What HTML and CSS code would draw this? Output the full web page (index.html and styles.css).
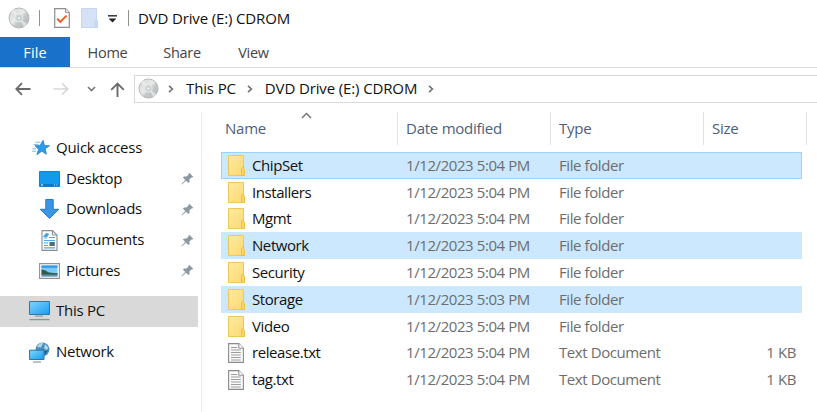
FILE: index.html
```html
<!DOCTYPE html>
<html lang="en">
<head>
    <meta charset="UTF-8">
    <meta name="viewport" content="width=device-width, initial-scale=1.0">
    <title>DVD Drive (E:) CDROM</title>
    <link rel="stylesheet" href="styles.css">
</head>
<body>

    <!-- shared icons -->
    <svg class="icon-defs" width="0" height="0">
        <defs>
            <linearGradient id="silver" x1="0" y1="0" x2="1" y2="1">
                <stop offset="0" stop-color="#d0d0d0"/>
                <stop offset="0.45" stop-color="#e9ebeb"/>
                <stop offset="0.6" stop-color="#c3c7c7"/>
                <stop offset="1" stop-color="#b5b8b8"/>
            </linearGradient>
            <linearGradient id="screen" x1="0" y1="0" x2="1" y2="1">
                <stop offset="0" stop-color="#7fd4fb"/>
                <stop offset="1" stop-color="#189df0"/>
            </linearGradient>
            <linearGradient id="yellow" x1="0" y1="0" x2="1" y2="1">
                <stop offset="0" stop-color="#ffeaa0"/>
                <stop offset="1" stop-color="#fbd970"/>
            </linearGradient>
        </defs>
        <symbol id="disc" viewBox="0 0 22 22">
            <circle cx="11" cy="11" r="10" fill="url(#silver)" stroke="#b4b7b7"/>
            <path d="M11 11 3 5l3-3zM11 11l8 6-3 3z" fill="#f4f6f6" opacity=".6"/>
            <circle cx="11" cy="11" r="4" fill="#cfd5d5" stroke="#e4e7e7"/>
            <circle cx="11" cy="11" r="1.5" fill="#fff" stroke="#b0b5b5" stroke-width=".6"/>
        </symbol>
        <symbol id="folder" viewBox="0 0 17 21">
            <path d="M.5.5h15v13l1 1v6H.5z" fill="url(#yellow)" stroke="#f0c757"/>
            <path d="M13.5 20.5v-7.2l2-1.8v2l1 1v6z" fill="#fbd566" stroke="#eabd46" stroke-width=".9"/>
        </symbol>
        <symbol id="text-file" viewBox="0 0 16 20">
            <path d="M.6.6h10.2l4.6 4.6v14.2H.6z" fill="#fafafa" stroke="#8b8b8b" stroke-width="1.1"/>
            <path d="M10.8.6v4.6h4.6" fill="#fff" stroke="#8b8b8b"/>
            <path d="M3 4.5h6M3 7h9.8M3 9.5h9.8M3 12h9.8M3 14.5h9.8M3 17h9.8" stroke="#9c9c9c"/>
        </symbol>
        <symbol id="pin" viewBox="0 0 13 13">
            <path d="M8.2.7l4.1 4.1-1.1.8-.7-.2-2.1 2.2.2 2.4-1.1 1.1L5 8.7.8 12.4l-.4-.3L4.2 8 1.9 5.5 3 4.4l2.4.2 2.2-2.1-.2-.7z" fill="#8c99a3"/>
        </symbol>
        <symbol id="chevron" viewBox="0 0 6 8">
            <path d="M1 .8 4.4 4 1 7.2" fill="none" stroke="#707070" stroke-width="1.6"/>
        </symbol>
    </svg>

    <div class="window">
        <header class="titlebar">
            <svg class="title-disc" width="22" height="22"><use href="#disc"/></svg>
            <span class="divider first"></span>
            <svg class="check" width="16" height="20" viewBox="0 0 16 20">
                <path d="M.7.7h10.8l3.8 3.8v14.8H.7z" fill="#fcfcfc" stroke="#8e8e8e" stroke-width="1.2"/>
                <path d="M11.5.7v3.8h3.8" fill="#eee" stroke="#999"/>
                <path d="M3.2 10.6l3 3.3 6.4-6.3" fill="none" stroke="#ee5a24" stroke-width="2"/>
            </svg>
            <svg class="new-folder" width="17" height="20" viewBox="0 0 17 20">
                <path d="M.5.5h15v11l1 1v7H.5z" fill="#d5e1f5" stroke="#c6d6ef"/>
                <path d="M13.5 19.5v-7l2-1 1 1v7z" fill="#c7d7f0"/>
            </svg>
            <svg class="customize" width="9" height="8" viewBox="0 0 9 8">
                <path d="M0 .8h9" stroke="#333" stroke-width="1.5"/>
                <path d="M.6 3.4h7.8L4.5 7.4z" fill="#222"/>
            </svg>
            <span class="divider second"></span>
            <span class="window-title">DVD Drive (E:) CDROM</span>
        </header>

        <nav class="ribbon">
            <span class="tab file">File</span>
            <span class="tab home">Home</span>
            <span class="tab share">Share</span>
            <span class="tab view">View</span>
        </nav>

        <div class="toolbar">
            <svg class="back" width="16" height="14" viewBox="0 0 16 14">
                <path d="M15.5 7H1.5M7 1.2 1.3 7 7 12.8" fill="none" stroke="#6a6a6a" stroke-width="1.8"/>
            </svg>
            <svg class="forward" width="16" height="14" viewBox="0 0 16 14">
                <path d="M.5 7h14M9 1.2 14.7 7 9 12.8" fill="none" stroke="#d6d6d6" stroke-width="1.6"/>
            </svg>
            <svg class="recent" width="9" height="6" viewBox="0 0 9 6">
                <path d="M1 1l3.5 3.5L8 1" fill="none" stroke="#777" stroke-width="1.6"/>
            </svg>
            <svg class="up" width="15" height="15" viewBox="0 0 15 15">
                <path d="M7.5 15V1.6M1.2 7.8l6.3-6.3 6.3 6.3" fill="none" stroke="#6a6a6a" stroke-width="1.9"/>
            </svg>
            <div class="address">
                <svg width="21" height="21"><use href="#disc"/></svg>
                <svg class="sep" width="6" height="8"><use href="#chevron"/></svg>
                <span class="crumb">This PC</span>
                <svg class="sep" width="6" height="8"><use href="#chevron"/></svg>
                <span class="crumb">DVD Drive (E:) CDROM</span>
                <svg class="sep" width="6" height="8"><use href="#chevron"/></svg>
            </div>
        </div>

        <div class="main">
            <aside class="sidebar">
                <div class="nav-item top">
                    <svg width="18" height="16" viewBox="0 0 18 16">
                        <path d="M11.2.3l1.2 5.1 5.2.3-4.3 3 1.1 5.6-4.6-3.1-4.9 3.5 1.7-5.5-3.7-3.5 5.1-.2z" fill="#2c9be8" stroke="#1979c4" stroke-width=".7"/>
                        <path d="M3.5 2.2h5M1.5 4.4h5M.5 8.8h3.5M0 11.2h4" stroke="#74bdee"/>
                    </svg>
                    <span>Quick access</span>
                </div>
                <div class="nav-item">
                    <svg width="21" height="16" viewBox="0 0 21 16">
                        <path d="M.5.5h20v15H.5z" fill="#129bed" stroke="#1b7fd0"/>
                        <path d="M1 14h19" stroke="#0b5fa8" stroke-width="1.2"/>
                        <path d="M2 14h2M15 14h1M17.5 14h1" stroke="#fff"/>
                    </svg>
                    <span>Desktop</span>
                    <svg class="pin" width="13" height="13"><use href="#pin"/></svg>
                </div>
                <div class="nav-item">
                    <svg width="21" height="20" viewBox="0 0 21 20">
                        <path d="M6.8.5h7.4v9.8h5.6L10.5 19.4 1.2 10.3h5.6z" fill="#3a96e5" stroke="#2279c8"/>
                    </svg>
                    <span>Downloads</span>
                    <svg class="pin" width="13" height="13"><use href="#pin"/></svg>
                </div>
                <div class="nav-item">
                    <svg width="21" height="21" viewBox="0 0 21 21">
                        <path d="M3 .6h10.5L18 5v15.4H3z" fill="#fcfcfc" stroke="#8d8d8d" stroke-width="1.1"/>
                        <path d="M13.5.6V5H18" fill="none" stroke="#8d8d8d"/>
                        <path d="M5 6.5l2.3-3 2 .7-1.4 2.3zM5 8h3M10 7.5h6M5 10.5h11M5 13h4M5 15.5h4M5 17.8h11" fill="#2c9be8" stroke="#50a7e5" stroke-width="1.2"/>
                        <path d="M10.5 12h5.3v4h-5.3z" fill="#4c6f80"/>
                    </svg>
                    <span>Documents</span>
                    <svg class="pin" width="13" height="13"><use href="#pin"/></svg>
                </div>
                <div class="nav-item">
                    <svg width="21" height="16" viewBox="0 0 21 16">
                        <path d="M.6.6h19.8v14.8H.6z" fill="#fff" stroke="#929292" stroke-width="1.1"/>
                        <path d="M2.5 2.5h16v11h-16z" fill="#7ec8f5"/>
                        <path d="M2.5 2.5h16v2.3h-16z" fill="#3297e5"/>
                        <path d="M2.5 6.5c4 .2 5 2.3 8 3 3 .4 5 .8 8 .6v2h-16z" fill="#315b4d"/>
                        <path d="M2.5 11.5h16v2h-16z" fill="#5c91ad"/>
                    </svg>
                    <span>Pictures</span>
                    <svg class="pin" width="13" height="13"><use href="#pin"/></svg>
                </div>
                <div class="nav-item top selected">
                    <svg width="21" height="20" viewBox="0 0 21 20">
                        <path d="M.5.5h20v13H.5z" fill="url(#screen)" stroke="#2a79ae"/>
                        <path d="M7 14.5h7v1.3H5.5z" fill="#909ca5"/>
                        <path d="M.5 18.6h20" stroke="#7c98aa" stroke-width="1.3"/>
                    </svg>
                    <span>This PC</span>
                </div>
                <div class="nav-item top network">
                    <svg width="21" height="21" viewBox="0 0 21 21">
                        <circle cx="13.5" cy="7.3" r="6.9" fill="#4c8eb8"/>
                        <path d="M8 5c1-3 4-4.3 6.4-4.2L12 5.5zM16 2l3.3 3.5L18 8l-3-1.5z" fill="#a9d8eb"/>
                        <path d="M15.5 9l3.5-.5-3 4.5z" fill="#245e87"/>
                        <path d="M.5 8.2h14.5v9.3H.5z" fill="url(#screen)" stroke="#2676ad"/>
                        <path d="M4 20h8" stroke="#8b9aa5" stroke-width="1.2"/>
                    </svg>
                    <span>Network</span>
                </div>
            </aside>

            <section class="files">
                <svg class="sort" width="11" height="7" viewBox="0 0 11 7">
                    <path d="M1 6l4.5-4.5L10 6" fill="none" stroke="#777" stroke-width="1.5"/>
                </svg>
                <div class="columns">
                    <span class="h-name">Name</span>
                    <span>Date modified</span>
                    <span>Type</span>
                    <span>Size</span>
                </div>
                <div class="rows">
                    <div class="row selected focused">
                        <svg width="17" height="21"><use href="#folder"/></svg>
                        <span class="name">ChipSet</span><span class="date">1/12/2023 5:04 PM</span><span class="type">File folder</span><span class="size"></span>
                    </div>
                    <div class="row">
                        <svg width="17" height="21"><use href="#folder"/></svg>
                        <span class="name">Installers</span><span class="date">1/12/2023 5:04 PM</span><span class="type">File folder</span><span class="size"></span>
                    </div>
                    <div class="row">
                        <svg width="17" height="21"><use href="#folder"/></svg>
                        <span class="name">Mgmt</span><span class="date">1/12/2023 5:04 PM</span><span class="type">File folder</span><span class="size"></span>
                    </div>
                    <div class="row selected">
                        <svg width="17" height="21"><use href="#folder"/></svg>
                        <span class="name">Network</span><span class="date">1/12/2023 5:04 PM</span><span class="type">File folder</span><span class="size"></span>
                    </div>
                    <div class="row">
                        <svg width="17" height="21"><use href="#folder"/></svg>
                        <span class="name">Security</span><span class="date">1/12/2023 5:04 PM</span><span class="type">File folder</span><span class="size"></span>
                    </div>
                    <div class="row selected">
                        <svg width="17" height="21"><use href="#folder"/></svg>
                        <span class="name">Storage</span><span class="date">1/12/2023 5:03 PM</span><span class="type">File folder</span><span class="size"></span>
                    </div>
                    <div class="row">
                        <svg width="17" height="21"><use href="#folder"/></svg>
                        <span class="name">Video</span><span class="date">1/12/2023 5:04 PM</span><span class="type">File folder</span><span class="size"></span>
                    </div>
                    <div class="row">
                        <svg width="16" height="20"><use href="#text-file"/></svg>
                        <span class="name">release.txt</span><span class="date">1/12/2023 5:04 PM</span><span class="type">Text Document</span><span class="size">1 KB</span>
                    </div>
                    <div class="row">
                        <svg width="16" height="20"><use href="#text-file"/></svg>
                        <span class="name">tag.txt</span><span class="date">1/12/2023 5:04 PM</span><span class="type">Text Document</span><span class="size">1 KB</span>
                    </div>
                </div>
            </section>
        </div>
    </div>

</body>
</html>
```
FILE: styles.css
```css
* {
    box-sizing: border-box;
}
body {
    margin: 0;
    background: #fff;
    color: #111;
    font-family: "Open Sans", "Noto Sans", sans-serif;
    font-size: 15px;
    letter-spacing: -0.42px;
    line-height: 20px;
    white-space: nowrap;
    overflow: hidden;
}
svg {
    display: block;
    flex: none;
}
.icon-defs {
    position: absolute;
}
.window {
    width: 817px;
    height: 412px;
    display: flex;
    flex-direction: column;
    overflow: hidden;
}
.titlebar {
    height: 37px;
    padding: 0 0 2px 8px;
    display: flex;
    align-items: center;
}
.divider {
    width: 1px;
    height: 16px;
    background: #929292;
}
.first {
    margin-left: 9px;
}
.check {
    margin-left: 14px;
}
.new-folder {
    margin-left: 11px;
}
.customize {
    margin: 3px 0 0 10px;
}
.second {
    margin-left: 11px;
}
.window-title {
    margin-left: 9px;
    letter-spacing: -0.15px;
}
.ribbon {
    height: 31px;
    display: flex;
    border-bottom: 1px solid #dadbdc;
    color: #444;
    font-size: 14.5px;
    letter-spacing: -0.3px;
}
.tab {
    height: 30px;
    line-height: 31px;
    text-align: center;
}
.file {
    width: 70px;
    background: #1971ca;
    color: #fff;
    letter-spacing: 0.1px;
}
.home {
    width: 75px;
}
.share {
    width: 74px;
}
.view {
    width: 69px;
}
.toolbar {
    height: 44px;
    padding: 7px 0 9px 15px;
    display: flex;
    align-items: center;
}
.forward {
    margin-left: 22px;
}
.recent {
    margin-left: 18px;
}
.up {
    margin-left: 14px;
}
.address {
    flex: 1;
    height: 28px;
    margin-left: 9px;
    padding: 0 0 2px 3px;
    display: flex;
    align-items: center;
    border: 1px solid #d9d9d9;
    border-right: 0;
    letter-spacing: -0.13px;
}
.sep {
    margin: 1px 0 0 9px;
}
.sep + .crumb {
    margin-left: 12px;
    padding-bottom: 1px;
}
.crumb + .sep {
    margin-left: 11px;
}
.main {
    flex: 1;
    display: flex;
}
.sidebar {
    width: 202px;
    padding-top: 21px;
    border-right: 1px solid #ececec;
    letter-spacing: -0.25px;
}
.nav-item {
    height: 30.6px;
    padding-left: 39px;
    display: flex;
    align-items: center;
    gap: 6px;
}
.nav-item span {
    padding-bottom: 2px;
}
.nav-item.top {
    padding-left: 32px;
}
.nav-item .pin {
    margin-left: auto;
    margin-right: 7px;
}
.nav-item.selected {
    width: 198px;
    height: 31px;
    margin-top: 10px;
    padding-left: 29px;
    background: #d9d9d9;
}
.nav-item.network {
    margin-top: 10px;
    padding-left: 29px;
}
.files {
    flex: 1;
    position: relative;
}
/* sits over the Name column header */
.sort {
    position: absolute;
    left: 99px;
    top: 0;
}
.columns {
    height: 32px;
    display: grid;
    grid-template-columns: 196px 153px 153px 103px;
    color: #4c607a;
    line-height: 33px;
    letter-spacing: -0.25px;
}
.columns span {
    padding-left: 8px;
    border-right: 1px solid #e2e2e2;
}
.columns .h-name {
    padding-left: 23px;
}
.rows {
    margin: 8px 0 0 19px;
    width: 581px;
}
.row {
    height: 26.8px;
    padding-left: 7px;
    display: grid;
    grid-template-columns: 24px 154px 153px 153px 84px;
    align-items: center;
    color: #6d6d6d;
}
.row span {
    padding-bottom: 1px;
}
.row .name {
    color: #111;
}
.row.selected {
    background: #cce8ff;
}
.row.focused {
    padding-left: 6px;
    border: 1px solid #99d1ff;
}
.size {
    text-align: right;
}
```
